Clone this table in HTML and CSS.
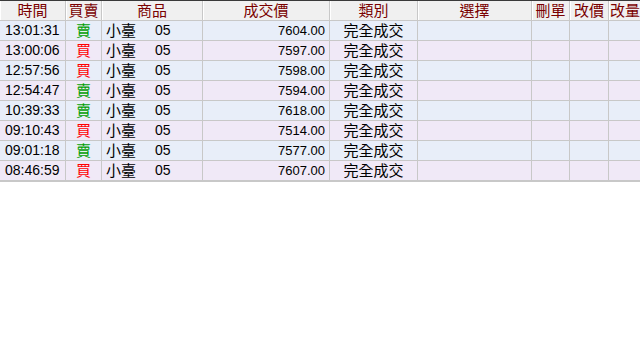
FILE: index.html
```html
<!DOCTYPE html>
<html lang="zh-Hant">
<head>
<meta charset="utf-8">
<link rel="stylesheet" href="styles.css">
</head>
<body>
<div class="grid">
  <div class="row head">
    <div class="cell">時間</div><div class="cell">買賣</div><div class="cell">商品</div><div class="cell">成交價</div><div class="cell">類別</div><div class="cell">選擇</div><div class="cell">刪單</div><div class="cell">改價</div><div class="cell last">改量</div>
  </div>
  <div class="row odd"><div class="cell time">13:01:31</div><div class="cell side sell">賣</div><div class="cell prod"><span class="pname">小臺</span><span class="pno">05</span></div><div class="cell price">7604.00</div><div class="cell type">完全成交</div><div class="cell"></div><div class="cell"></div><div class="cell"></div><div class="cell"></div></div>
  <div class="row even"><div class="cell time">13:00:06</div><div class="cell side buy">買</div><div class="cell prod"><span class="pname">小臺</span><span class="pno">05</span></div><div class="cell price">7597.00</div><div class="cell type">完全成交</div><div class="cell"></div><div class="cell"></div><div class="cell"></div><div class="cell"></div></div>
  <div class="row odd"><div class="cell time">12:57:56</div><div class="cell side buy">買</div><div class="cell prod"><span class="pname">小臺</span><span class="pno">05</span></div><div class="cell price">7598.00</div><div class="cell type">完全成交</div><div class="cell"></div><div class="cell"></div><div class="cell"></div><div class="cell"></div></div>
  <div class="row even"><div class="cell time">12:54:47</div><div class="cell side sell">賣</div><div class="cell prod"><span class="pname">小臺</span><span class="pno">05</span></div><div class="cell price">7594.00</div><div class="cell type">完全成交</div><div class="cell"></div><div class="cell"></div><div class="cell"></div><div class="cell"></div></div>
  <div class="row odd"><div class="cell time">10:39:33</div><div class="cell side sell">賣</div><div class="cell prod"><span class="pname">小臺</span><span class="pno">05</span></div><div class="cell price">7618.00</div><div class="cell type">完全成交</div><div class="cell"></div><div class="cell"></div><div class="cell"></div><div class="cell"></div></div>
  <div class="row even"><div class="cell time">09:10:43</div><div class="cell side buy">買</div><div class="cell prod"><span class="pname">小臺</span><span class="pno">05</span></div><div class="cell price">7514.00</div><div class="cell type">完全成交</div><div class="cell"></div><div class="cell"></div><div class="cell"></div><div class="cell"></div></div>
  <div class="row odd"><div class="cell time">09:01:18</div><div class="cell side sell">賣</div><div class="cell prod"><span class="pname">小臺</span><span class="pno">05</span></div><div class="cell price">7577.00</div><div class="cell type">完全成交</div><div class="cell"></div><div class="cell"></div><div class="cell"></div><div class="cell"></div></div>
  <div class="row even"><div class="cell time">08:46:59</div><div class="cell side buy">買</div><div class="cell prod"><span class="pname">小臺</span><span class="pno">05</span></div><div class="cell price">7607.00</div><div class="cell type">完全成交</div><div class="cell"></div><div class="cell"></div><div class="cell"></div><div class="cell"></div></div>
</div>
</body>
</html>
```

FILE: styles.css
```css
html, body {
  margin: 0;
  padding: 0;
  background: #ffffff;
}
body {
  width: 640px;
  height: 350px;
  font-family: "Liberation Sans", "Noto Sans CJK TC", sans-serif;
}
.grid {
  width: 640px;
  overflow: hidden;
  border-top: 1px solid #3a3a3a;
  border-bottom: 1px solid #c8c8c8;
}
.row {
  display: grid;
  grid-template-columns: 66px 36px 101px 127px 88px 114px 38px 39px 71px;
  grid-template-rows: 20px;
  width: 680px;
}
.cell {
  box-sizing: border-box;
  height: 20px;
  line-height: 19px;
  border-right: 1px solid #c8c8c8;
  border-bottom: 1px solid #c8c8c8;
  white-space: nowrap;
  font-size: 14px;
  color: #000;
}
.head .cell {
  background: #f0f0f0;
  color: #7a0000;
  font-family: "Noto Sans CJK TC", sans-serif;
  font-size: 15px;
  line-height: 18px;
  text-align: center;
  box-shadow: inset 1px 0 0 #ffffff;
}
.head .last {
  text-align: left;
  padding-left: 1px;
}
.odd .cell { background: #e8eef9; }
.even .cell { background: #f0e9f7; }

.time {
  padding-left: 5px;
}
.side {
  text-align: center;
  font-family: "Noto Sans CJK TC", sans-serif;
  font-size: 15px;
  line-height: 18px;
}
.row .buy { color: #ff0000; }
.row .sell { color: #00a000; }
.prod {
  display: flex;
  align-items: flex-start;
  padding-left: 4px;
}
.pname {
  width: 49px;
  font-family: "Noto Sans CJK TC", sans-serif;
  font-size: 15px;
  line-height: 18px;
}
.pno {
  font-size: 14px;
  line-height: 19px;
}
.price {
  text-align: right;
  padding-right: 4px;
  font-size: 13px;
}
.type {
  text-align: center;
  font-family: "Noto Sans CJK TC", sans-serif;
  font-size: 15px;
  line-height: 18px;
}
```
